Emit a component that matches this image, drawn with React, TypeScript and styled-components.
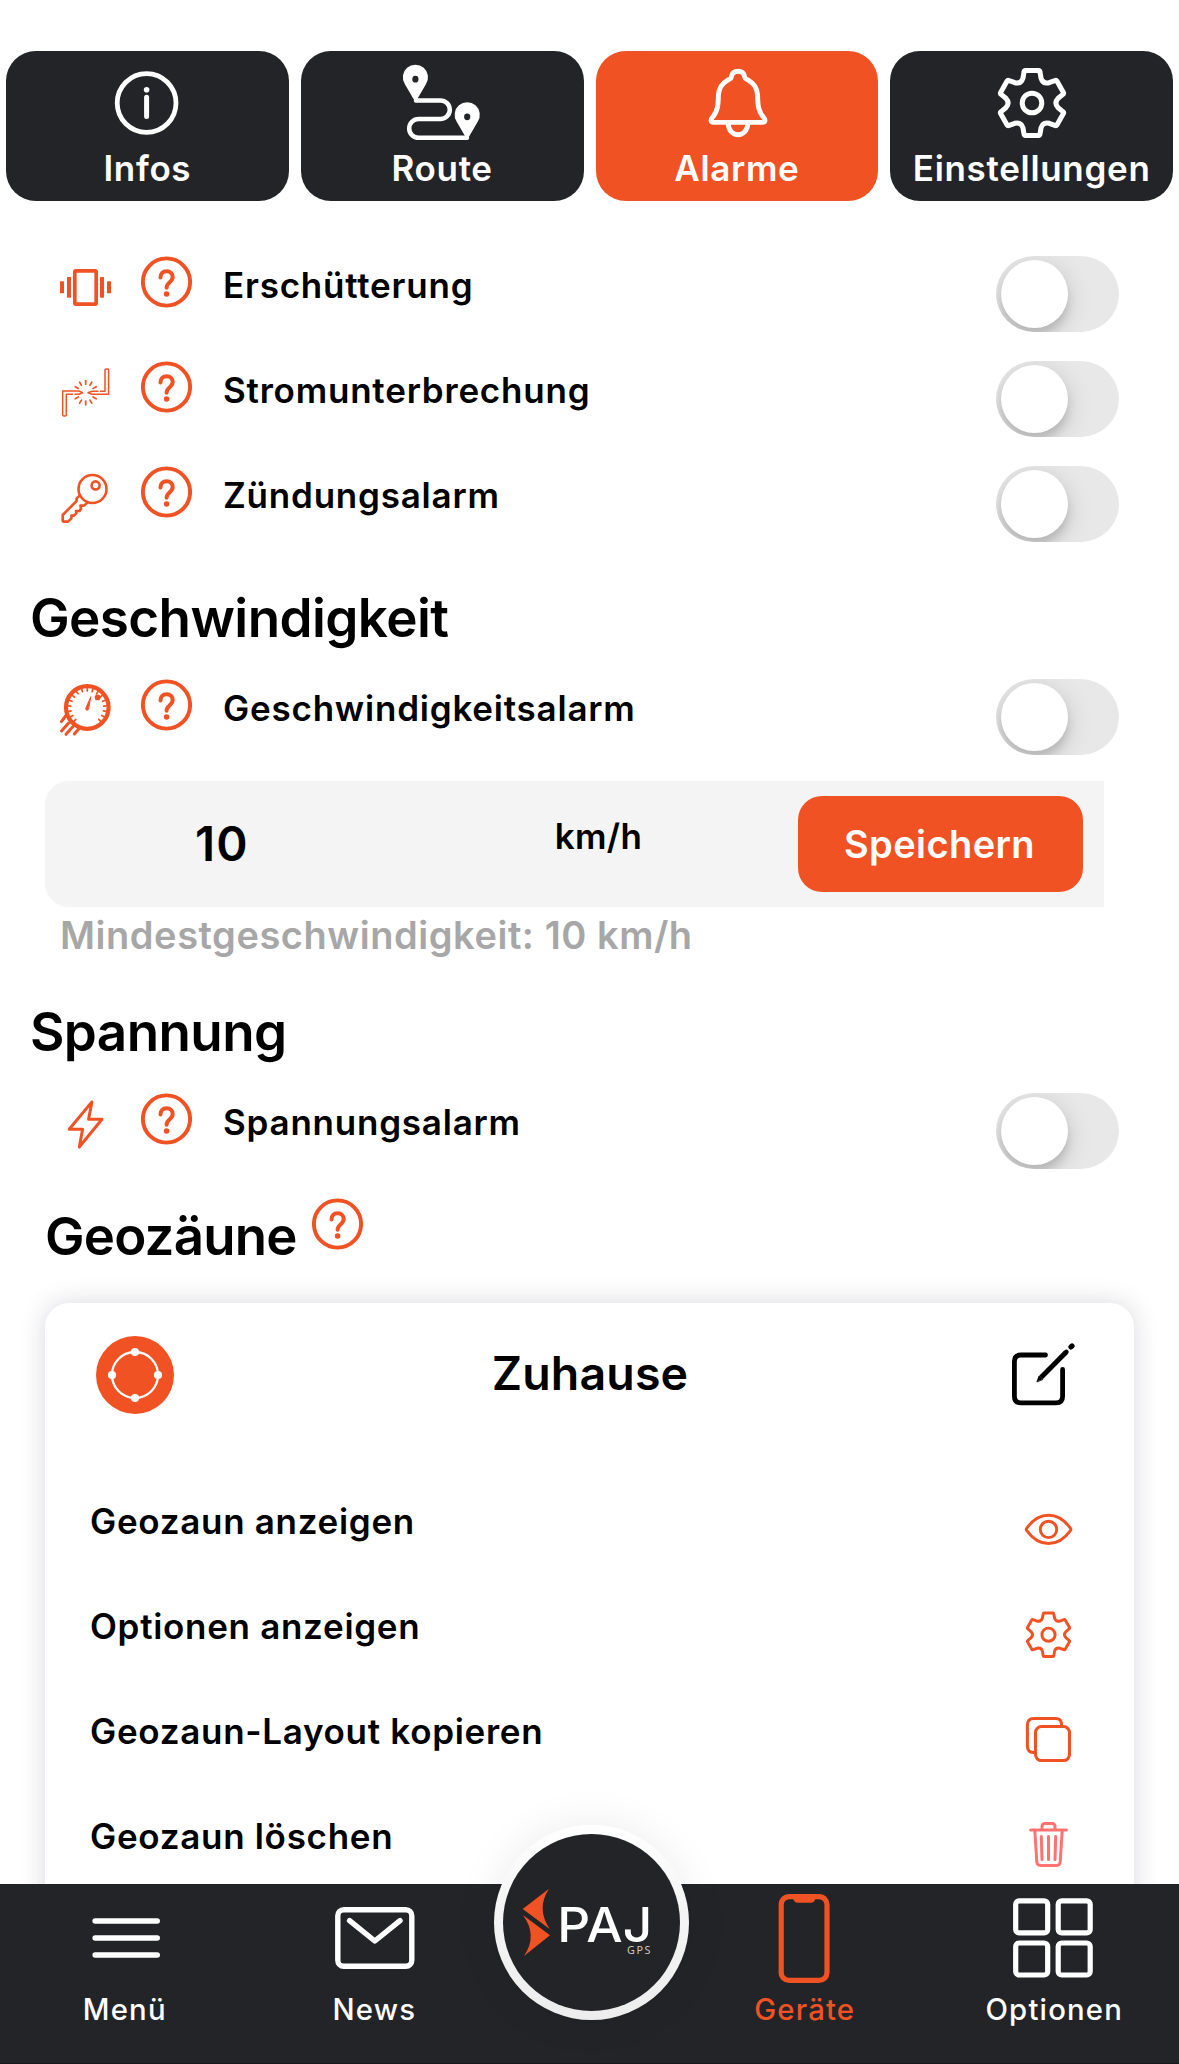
import React, { useState } from "react";
import styled, { createGlobalStyle } from "styled-components";

const ORANGE = "#f05223";
const DARK = "#232428";

const GlobalStyle = createGlobalStyle`
  * { box-sizing: border-box; }
  body { margin: 0; background: #fff; }
`;

const Screen = styled.div`
  width: 1179px;
  height: 2064px;
  overflow: hidden;
  display: flex;
  flex-direction: column;
  padding-top: 51px;
  background: #fff;
  color: #000;
  font-family: Inter, "Liberation Sans", sans-serif;
`;

const Tabs = styled.div`
  display: grid;
  grid-template-columns: repeat(4, 1fr);
  gap: 12px;
  padding: 0 6px;
  flex: none;
`;

const Tab = styled.button<{ $active?: boolean }>`
  height: 150px;
  padding: 6px 0 0;
  border: 0;
  border-radius: 30px;
  background: ${(p) => (p.$active ? ORANGE : DARK)};
  color: #fff;
  display: flex;
  flex-direction: column;
  align-items: center;
  font: 600 35px/44px Inter, "Liberation Sans", sans-serif;
  letter-spacing: 0.68px;
`;

const Icon = styled.svg<{ $w: number; $h?: number }>`
  display: block;
  flex: none;
  width: ${(p) => p.$w}px;
  height: ${(p) => p.$h ?? p.$w}px;
  fill: none;
  stroke: currentColor;
  stroke-linecap: round;
  stroke-linejoin: round;
`;

const Content = styled.main`
  flex: 1;
  min-height: 0;
  overflow: hidden;
  padding-top: 55px;
`;

const AlarmRow = styled.div<{ $h?: number }>`
  display: flex;
  align-items: flex-start;
  height: ${(p) => p.$h ?? 105}px;
  padding: 0 60px 0 54px;
  color: ${ORANGE};
`;

const HelpButton = styled.button`
  flex: none;
  width: 51px;
  height: 52px;
  padding: 0;
  border: 0;
  background: none;
  color: ${ORANGE};
`;

const RowHelp = styled.div`
  margin: 0 31px 0 24px;
`;

const AlarmLabel = styled.span`
  flex: 1;
  color: #000;
  font-size: 35px;
  line-height: 59px;
  font-weight: 600;
  letter-spacing: 0.78px;
`;

const Track = styled.button<{ $on: boolean }>`
  width: 123px;
  height: 76px;
  padding: 4px 5px;
  border: 0;
  border-radius: 38px;
  overflow: hidden;
  display: flex;
  justify-content: ${(p) => (p.$on ? "flex-end" : "flex-start")};
  background: ${(p) => (p.$on ? ORANGE : "#e8e8e8")};
`;

const Knob = styled.span`
  width: 67px;
  height: 68px;
  border-radius: 50%;
  background: #fff;
  box-shadow: 0 8px 8px rgba(0, 0, 0, 0.12), 0 6px 26px rgba(0, 0, 0, 0.16);
`;

const Heading = styled.h2<{ $top: number }>`
  margin: ${(p) => p.$top}px 0 28px;
  padding-left: 30px;
  font-size: 53px;
  line-height: 66px;
  font-weight: 600;
  letter-spacing: -0.6px;
`;

const SpeedBox = styled.div`
  display: grid;
  grid-template-columns: 354px 399px 285px;
  align-items: center;
  width: 1059px;
  height: 126px;
  margin-left: 45px;
  border-radius: 24px 0 0 24px;
  background: #f4f4f4;
  text-align: center;
  font-weight: 600;
`;

const SpeedValue = styled.span`
  font-size: 47.5px;
  line-height: 62px;
  letter-spacing: 1.4px;
`;

const SpeedUnit = styled.span`
  padding-bottom: 16px;
  font-size: 35px;
  line-height: 44px;
  letter-spacing: 0.3px;
`;

const SaveButton = styled.button`
  height: 96px;
  padding: 0 2px 0 0;
  border: 0;
  border-radius: 24px;
  background: ${ORANGE};
  color: #fff;
  font: 600 38px/48px Inter, "Liberation Sans", sans-serif;
  letter-spacing: 0.4px;
`;

const Hint = styled.p`
  margin: 0;
  padding-left: 60px;
  color: #a7a7a7;
  font-size: 38px;
  line-height: 56px;
  font-weight: 600;
  letter-spacing: 0.54px;
`;

const FenceHeader = styled.div`
  display: flex;
  align-items: flex-start;
  height: 105px;
  padding-left: 45px;
`;

const FenceTitle = styled.h2`
  width: 267px;
  margin: 5px 0 0;
  font-size: 52.8px;
  line-height: 66px;
  font-weight: 600;
  letter-spacing: -0.8px;
`;

const Card = styled.section`
  width: 1089px;
  height: 700px;
  margin-left: 45px;
  padding-top: 33px;
  border-radius: 24px;
  background: #fff;
  box-shadow: 0 0 26px rgba(30, 30, 60, 0.17);
`;

const CardHeader = styled.div`
  display: flex;
  align-items: center;
  height: 78px;
  padding: 0 57px 0 51px;
  margin-bottom: 84px;
`;

const CardTitle = styled.h3`
  flex: 1;
  margin: 0;
  padding: 0 2px 4px 0;
  text-align: center;
  font-size: 46.5px;
  line-height: 60px;
  font-weight: 600;
  letter-spacing: 0.15px;
`;

const ActionRow = styled.div<{ $color?: string }>`
  display: flex;
  align-items: flex-start;
  justify-content: space-between;
  height: 105px;
  padding: 0 54px 0 45px;
  color: ${(p) => p.$color ?? ORANGE};
`;

const ActionLabel = styled.span`
  color: #000;
  font-size: 35px;
  line-height: 46px;
  font-weight: 600;
  letter-spacing: 0.7px;
`;

const NavBar = styled.nav`
  position: relative;
  flex: none;
  height: 180px;
  display: grid;
  grid-template-columns: 1fr 1fr 181px 1fr 1fr;
  background: ${DARK};
  border-bottom: 1px solid #17171a;
`;

const NavItem = styled.button<{ $active?: boolean }>`
  padding: 4px 0 0;
  border: 0;
  background: none;
  color: ${(p) => (p.$active ? ORANGE : "#fff")};
  display: flex;
  flex-direction: column;
  align-items: center;
  justify-content: flex-start;
  font: 500 29.3px/43px Inter, "Liberation Sans", sans-serif;
  letter-spacing: 1.2px;
`;

const LogoButton = styled.button`
  position: absolute;
  left: 494px;
  top: -59px;
  width: 195px;
  height: 195px;
  padding: 9px;
  border: 0;
  border-radius: 50%;
  background: linear-gradient(#fff 0%, #f5f5f5 40%, #ededed 100%);
  box-shadow: 0 0 44px rgba(0, 0, 0, 0.08);
`;

const LogoDisc = styled.div`
  width: 177px;
  height: 177px;
  border-radius: 50%;
  background: ${DARK};
`;

/* Six-toothed cog centred on the origin. */
const gearPath = () => {
  const turn = (x: number, y: number, k: number) => {
    const a = (k * Math.PI) / 3;
    return `${(x * Math.cos(a) - y * Math.sin(a)).toFixed(2)},${(x * Math.sin(a) + y * Math.cos(a)).toFixed(2)}`;
  };
  let d = `M${turn(-9, -25, 0)}`;
  for (let k = 0; k < 6; k++) {
    d += ` L${turn(-8, -31, k)} Q${turn(-7.8, -32.5, k)} ${turn(-6.5, -32.5, k)}`;
    d += ` L${turn(6.5, -32.5, k)} Q${turn(7.8, -32.5, k)} ${turn(8, -31, k)}`;
    d += ` L${turn(9, -25, k)} Q${turn(10.8, -18.8, k)} ${turn(-9, -25, k + 1)}`;
  }
  return d + "Z";
};
const GEAR = gearPath();

const PIN = "M0,23 L-10.5,5 A12.6,12.6 0 1 1 10.5,5 Z M0,-3.4 A3.1,3.4 0 1 0 0,3.4 A3.1,3.4 0 1 0 0,-3.4 Z";

const InfoIcon = () => (
  <Icon $w={100} $h={89} viewBox="-50 57 100 89">
    <circle cx="-0.4" cy="103" r="29.4" strokeWidth="4.8" />
    <circle cx="-0.4" cy="89.8" r="2.8" fill="currentColor" stroke="none" />
    <path d="M-.4,97.2V116.4" strokeWidth="5" />
  </Icon>
);
const RouteIcon = () => (
  <Icon $w={100} $h={89} viewBox="-50 57 100 89">
    <path d="M-26,100.4H-1.5A9.3,9.3 0 0 1 -1.5,119H-23.4A9.4,9.4 0 0 0 -23.4,137.8H25" strokeWidth="4.5" />
    <g fill="currentColor" stroke="none" fillRule="evenodd">
      <path d={PIN} transform="translate(-26.6 79.2)" />
      <path d={PIN} transform="translate(25.2 116.8)" />
    </g>
  </Icon>
);
const BellIcon = () => (
  <Icon $w={100} $h={89} viewBox="-50 57 100 89" strokeWidth="4.9">
    <path d="M1,71.3C-2.6,71.3 -5.2,73.6 -5.8,77.4C-6,79 -8,79.2 -9.5,80.3C-15.5,83.6 -18.4,89 -18.6,95.5C-18.8,106 -19.4,110.5 -23.6,116.2C-27,120 -26.6,122.4 -23,122.4H25C28.6,122.4 29,120 25.6,116.2C21.4,110.5 20.8,106 20.6,95.5C20.4,89 17.5,83.6 11.5,80.3C10,79.2 8,79 7.8,77.4C7.2,73.6 4.6,71.3 1,71.3Z" />
    <path d="M-8.8,124.2C-8.4,130.6 -4,134.8 1,134.8C6,134.8 10.4,130.6 10.8,124.2" />
  </Icon>
);
const SettingsIcon = () => (
  <Icon $w={100} $h={89} viewBox="-50 57 100 89" strokeWidth="5">
    <g transform="translate(0 103)">
      <path d={GEAR} />
      <circle r="9.8" />
    </g>
  </Icon>
);

const VibrationIcon = () => (
  <Icon $w={63} viewBox="54 256 63 63">
    <rect x="74.8" y="270.8" width="21.4" height="33.4" rx="1.2" strokeWidth="3.7" />
    <g fill="currentColor" stroke="none">
      <rect x="60" y="281.3" width="4" height="12" rx=".6" />
      <rect x="67" y="277" width="4" height="20.7" rx=".6" />
      <rect x="100" y="277" width="4" height="20.7" rx=".6" />
      <rect x="107" y="281.3" width="4" height="12" rx=".6" />
    </g>
  </Icon>
);
const PowerIcon = () => (
  <Icon $w={63} viewBox="54 361 63 63" strokeWidth="1.5">
    <path d="M62.7,415V391H79L82.5,392.7L79,394.2H75M72.5,394.2H66.3V415Q66.3,416 65,416H64Q62.7,416 62.7,415" />
    <path d="M108.6,370V394.2H92L88,392.7L92,391.2H98M100.5,391.2H105V370Q105,369 106,369H107.6Q108.6,369 108.6,370" />
    {[-60, -30, 0, 30, 60, 120, 150, 180, 210, 240].map((a) => (
      <path key={a} d="M85.7,384.2V380.6" strokeWidth="1.7" transform={`rotate(${a} 85.7 392.7)`} />
    ))}
  </Icon>
);
const KeyIcon = () => (
  <Icon $w={63} viewBox="54 466 63 63" strokeWidth="2.6">
    <circle cx="92.5" cy="489" r="14" />
    <circle cx="95.6" cy="485.4" r="4" />
    <path d="M79.6,495.6L76.6,498.4V501L62.7,515V520.2Q62.7,521.6 64,521.6H68L71.4,518.4V515.6H74L76.4,513.2L76,511H79.6L81,508.6L80.4,505.6H84L87.6,502.4" />
  </Icon>
);
const SpeedIcon = () => (
  <Icon $w={63} viewBox="54 679 63 63">
    <circle cx="87.3" cy="707.5" r="21.3" strokeWidth="4.2" />
    {Array.from({ length: 17 }, (_, i) => -136 + i * 17).map((a) => (
      <path key={a} d="M87.3,687.5V691" strokeWidth="1.7" transform={`rotate(${a} 87.3 707.5)`} />
    ))}
    <path d="M90.7,697L85.6,708.8A1.6,1.6 0 0 0 88.2,709.8Z" fill="currentColor" strokeWidth="1" />
    <circle cx="97.6" cy="697.4" r="2.9" fill="currentColor" stroke="none" />
    <path d="M66,715.5L61.4,721.6M68.6,723L61.5,731M73,726.5L66,734.3M79.5,728L74.4,734" strokeWidth="3" />
  </Icon>
);
const BoltIcon = () => (
  <Icon $w={63} viewBox="54 1093 63 63" strokeWidth="3">
    <path d="M91.9,1101.9L69.2,1129.3H82.6L79.3,1147L102,1119.2H88.6Z" />
  </Icon>
);
const QuestionIcon = () => (
  <Icon $w={51} $h={52} viewBox="-25.5 -26 51 52">
    <circle r="23.6" strokeWidth="3.9" />
    <path d="M-6,-4.4C-6,-8.4 -3.6,-10.8 .2,-10.8C3.8,-10.8 6.2,-8.4 6.2,-5C6.2,.4 .1,0 .1,5.8" strokeWidth="4" />
    <circle cx=".1" cy="12" r="2.8" fill="currentColor" stroke="none" />
  </Icon>
);

const CircleFenceIcon = () => (
  <Icon $w={78} viewBox="-39 -39 78 78">
    <circle r="39" fill={ORANGE} stroke="none" />
    <circle r="23" stroke="#fff" strokeWidth="2.3" />
    <g fill="#fff" stroke="none">
      <circle cy="-23" r="4.1" />
      <circle cx="23" r="4.1" />
      <circle cy="23" r="4.1" />
      <circle cx="-23" r="4.1" />
    </g>
  </Icon>
);
const EditIcon = () => (
  <Icon $w={69} $h={78} viewBox="1008 1336 69 78" strokeWidth="4.8">
    <path d="M1045.5,1355H1021Q1014.4,1355 1014.4,1361.6V1396.2Q1014.4,1402.8 1021,1402.8H1056Q1062.6,1402.8 1062.6,1396.2V1369.5" />
    <path d="M1041,1377.5L1066,1352.3" strokeWidth="5" strokeLinecap="butt" />
    <path d="M1065.2,1353.1L1066.4,1351.9" strokeWidth="4.6" />
    <path d="M1037,1381.6L1039,1376L1042.6,1379.3Z" fill="currentColor" strokeWidth=".8" />
    <path d="M1071,1346.9L1072,1346" strokeWidth="5.2" />
  </Icon>
);
const EyeIcon = () => (
  <Icon $w={63} viewBox="1017 1498 63 63" strokeWidth="2.9">
    <path d="M1026.8,1528.2C1039,1511 1058,1511 1070.4,1528.2Q1071.4,1529.4 1070.4,1530.6C1058,1547.8 1039,1547.8 1026.8,1530.6Q1025.8,1529.4 1026.8,1528.2Z" />
    <circle cx="1048.5" cy="1529.4" r="8.2" />
  </Icon>
);
const SmallGearIcon = () => (
  <Icon $w={63} viewBox="-31.5 -31.5 63 63" strokeWidth="4.4">
    <g transform="translate(0 .2) scale(.67)">
      <path d={GEAR} />
      <circle r="9.8" />
    </g>
  </Icon>
);
const CopyIcon = () => (
  <Icon $w={63} viewBox="1017 1708 63 63" strokeWidth="3">
    <rect x="1035.5" y="1726.6" width="34" height="34" rx="6" />
    <path d="M1061.5,1726V1724.4Q1061.5,1718.6 1055.5,1718.6H1034Q1027.4,1718.6 1027.4,1725V1746Q1027.4,1752.4 1033.4,1752.4H1035" />
  </Icon>
);
const TrashIcon = () => (
  <Icon $w={63} viewBox="1017 1813 63 63" strokeWidth="3">
    <path d="M1030.6,1830H1066.4M1042,1829V1826.4Q1042,1823.4 1045,1823.4H1052Q1055,1823.4 1055,1826.4V1829" />
    <path d="M1034.8,1830.5L1036.8,1862Q1037,1865.4 1040.4,1865.4H1056.6Q1060,1865.4 1060.2,1862L1062.2,1830.5" />
    <path d="M1041.3,1836.6L1042,1859.6M1048.5,1836.6V1859.6M1055.7,1836.6L1055,1859.6" />
  </Icon>
);

const MenuIcon = () => (
  <Icon $w={100} viewBox="-50 1888 100 100" strokeWidth="5.6">
    <path d="M-29.8,1921H32.2M-29.8,1938H32.2M-29.8,1955H32.2" />
  </Icon>
);
const MailIcon = () => (
  <Icon $w={100} viewBox="-50 1888 100 100" strokeWidth="5.4">
    <rect x="-36.2" y="1909.7" width="74" height="56.6" rx="6" />
    <path d="M-24.4,1920.6L.8,1941L26,1920.6" />
  </Icon>
);
const PhoneIcon = () => (
  <Icon $w={100} viewBox="-50 1888 100 100" strokeWidth="5.2">
    <rect x="-23.8" y="1896.6" width="45.8" height="83.8" rx="8" />
    <path d="M-12.8,1897L-11.2,1900.2Q-10.2,1902.8 -7.2,1902.8H5.8Q8.8,1902.8 9.8,1900.2L11.4,1897Z" fill="currentColor" stroke="none" />
  </Icon>
);
const GridIcon = () => (
  <Icon $w={100} viewBox="-50 1888 100 100" strokeWidth="5.2">
    <rect x="-38.3" y="1900.9" width="32" height="32" rx="3.5" />
    <rect x="4.2" y="1900.9" width="32" height="32" rx="3.5" />
    <rect x="-38.3" y="1943" width="32" height="32" rx="3.5" />
    <rect x="4.2" y="1943" width="32" height="32" rx="3.5" />
  </Icon>
);

const LogoMark = styled.svg`
  display: block;
  width: 177px;
  height: 177px;
`;

const Logo = () => (
  <LogoMark viewBox="9 9 177 177">
    <path d="M55,63.7L28.7,84L55.7,104Q42,83.5 55,63.7Z" fill={ORANGE} />
    <path d="M28.9,90L56,110.3L30,131Q44,110.3 28.9,90Z" fill={ORANGE} />
    <text x="63.2" y="117.3" fill="#fff" fontFamily="Inter, sans-serif" fontSize="47.6" fontWeight="500" textLength="95" lengthAdjust="spacingAndGlyphs">
      PAJ
    </text>
    <text x="133" y="129" fill="#c8c8ca" fontFamily="'Noto Sans', sans-serif" fontSize="10.8" textLength="23.4">
      GPS
    </text>
  </LogoMark>
);

const Help = () => (
  <HelpButton aria-label="Hilfe">
    <QuestionIcon />
  </HelpButton>
);

const Toggle = () => {
  const [on, setOn] = useState(false);
  return (
    <Track role="switch" aria-checked={on} $on={on} onClick={() => setOn(!on)}>
      <Knob />
    </Track>
  );
};

const Alarm = ({ icon, label, height }: { icon: React.ReactNode; label: string; height?: number }) => (
  <AlarmRow $h={height}>
    {icon}
    <RowHelp>
      <Help />
    </RowHelp>
    <AlarmLabel>{label}</AlarmLabel>
    <Toggle />
  </AlarmRow>
);

export default function App() {
  return (
    <>
      <GlobalStyle />
      <Screen>
        <Tabs>
          <Tab><InfoIcon />Infos</Tab>
          <Tab><RouteIcon />Route</Tab>
          <Tab $active><BellIcon />Alarme</Tab>
          <Tab><SettingsIcon />Einstellungen</Tab>
        </Tabs>
        <Content>
          <Alarm icon={<VibrationIcon />} label="Erschütterung" />
          <Alarm icon={<PowerIcon />} label="Stromunterbrechung" />
          <Alarm icon={<KeyIcon />} label="Zündungsalarm" />
          <Heading $top={14}>Geschwindigkeit</Heading>
          <Alarm icon={<SpeedIcon />} label="Geschwindigkeitsalarm" height={102} />
          <SpeedBox>
            <SpeedValue>10</SpeedValue>
            <SpeedUnit>km/h</SpeedUnit>
            <SaveButton>Speichern</SaveButton>
          </SpeedBox>
          <Hint>Mindestgeschwindigkeit: 10 km/h</Hint>
          <Heading $top={36}>Spannung</Heading>
          <Alarm icon={<BoltIcon />} label="Spannungsalarm" />
          <FenceHeader>
            <FenceTitle>Geozäune</FenceTitle>
            <Help />
          </FenceHeader>
          <Card>
            <CardHeader>
              <CircleFenceIcon />
              <CardTitle>Zuhause</CardTitle>
              <EditIcon />
            </CardHeader>
            <ActionRow><ActionLabel>Geozaun anzeigen</ActionLabel><EyeIcon /></ActionRow>
            <ActionRow><ActionLabel>Optionen anzeigen</ActionLabel><SmallGearIcon /></ActionRow>
            <ActionRow><ActionLabel>Geozaun-Layout kopieren</ActionLabel><CopyIcon /></ActionRow>
            <ActionRow $color="#ff7272"><ActionLabel>Geozaun löschen</ActionLabel><TrashIcon /></ActionRow>
          </Card>
        </Content>
        <NavBar>
          <NavItem><MenuIcon />Menü</NavItem>
          <NavItem><MailIcon />News</NavItem>
          <span />
          <NavItem $active><PhoneIcon />Geräte</NavItem>
          <NavItem><GridIcon />Optionen</NavItem>
          <LogoButton aria-label="PAJ GPS">
            <LogoDisc><Logo /></LogoDisc>
          </LogoButton>
        </NavBar>
      </Screen>
    </>
  );
}
